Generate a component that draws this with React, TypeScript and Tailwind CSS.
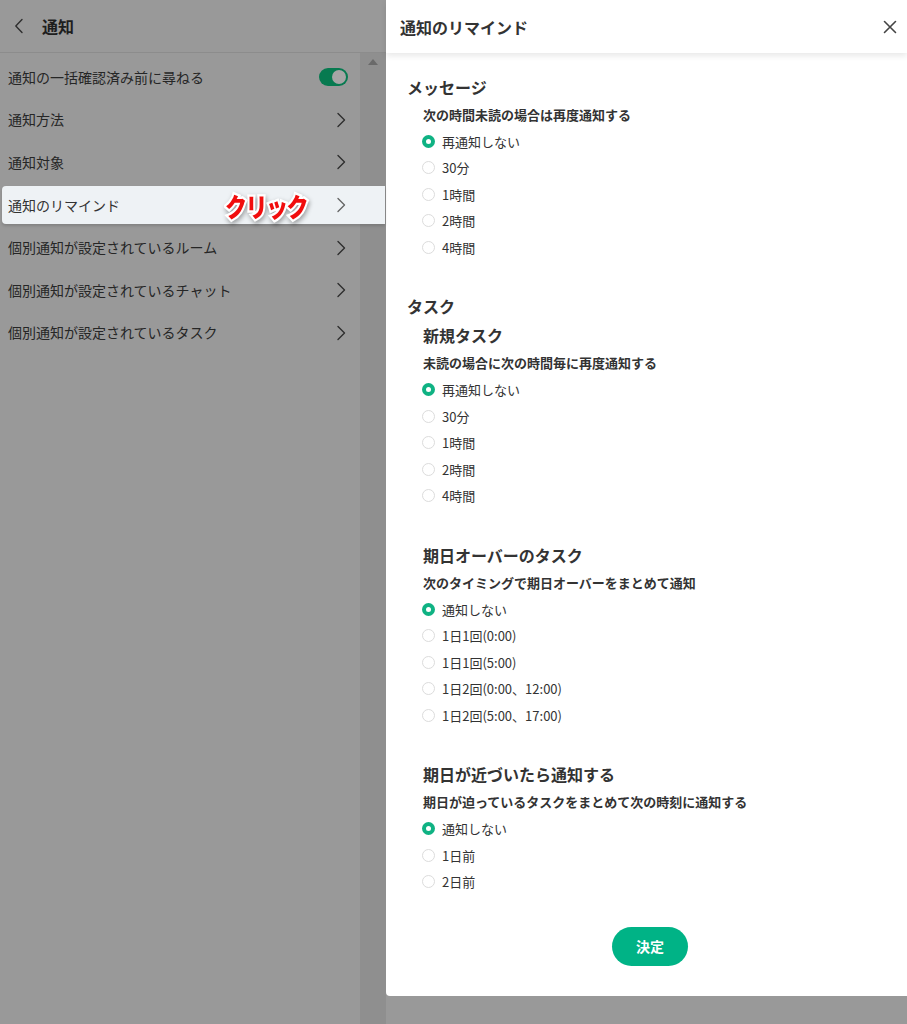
import React from "react";

const FONT = { fontFamily: '"Noto Sans CJK JP", "Noto Sans", sans-serif' };

function Chevron({ color = "#2e2e2e" }: { color?: string }) {
  return (
    <svg width="10" height="16" viewBox="0 0 10 16" fill="none">
      <path d="M2 1.5 L8.5 8 L2 14.5" stroke={color} strokeWidth="1.4" strokeLinecap="round" strokeLinejoin="round" />
    </svg>
  );
}

function Radio({ checked, label }: { checked?: boolean; label: string }) {
  return (
    <div className="flex h-[26.5px] items-center gap-[7px] pl-[15px]">
      {checked ? (
        <span className="flex h-[13px] w-[13px] items-center justify-center rounded-full bg-[#0fb283]">
          <span className="h-[5px] w-[5px] rounded-full bg-white" />
        </span>
      ) : (
        <span className="h-[13px] w-[13px] rounded-full border-[1.5px] border-[#dcdcdc] bg-white" />
      )}
      <span className="text-[13px] text-[#333]">{label}</span>
    </div>
  );
}

function Group({ title, sub, options, indent }: { title: string; sub: string; options: string[]; indent?: boolean }) {
  return (
    <div className="flex flex-col">
      <div className={`flex h-[29px] items-center text-[16px] font-bold text-[#333] ${indent ? "pl-[16px]" : ""}`}>{title}</div>
      <div className="flex h-[27px] items-center pl-[16px] text-[13px] font-bold text-[#333]">{sub}</div>
      <div className="flex flex-col">
        {options.map((o, i) => (
          <Radio key={o} label={o} checked={i === 0} />
        ))}
      </div>
    </div>
  );
}

export default function App() {
  const rows = [
    "通知方法",
    "通知対象",
    "通知のリマインド",
    "個別通知が設定されているルーム",
    "個別通知が設定されているチャット",
    "個別通知が設定されているタスク",
  ];
  return (
    <div style={FONT} className="flex h-[1024px] w-[907px] overflow-hidden bg-[#999999]">
      {/* Left dimmed panel */}
      <div className="flex w-[386px] shrink-0 flex-col">
        <div className="flex h-[53px] items-center gap-[18px] border-b border-[#8c8c8c] pl-[14px]">
          <svg width="10" height="16" viewBox="0 0 10 16" fill="none">
            <path d="M8 1.5 L1.8 8 L8 14.5" stroke="#2e2e2e" strokeWidth="1.4" strokeLinecap="round" strokeLinejoin="round" />
          </svg>
          <span className="text-[16px] font-bold text-[#1e1e1e]">通知</span>
        </div>
        <div className="flex flex-1">
          <div className="flex w-[360px] shrink-0 flex-col pt-[3px]">
            <div className="flex h-[42.6px] items-center justify-between pl-[8px] pr-[12px]">
              <span className="text-[14px] text-[#262626]">通知の一括確認済み前に尋ねる</span>
              <span className="flex h-[18px] w-[29px] items-center justify-end rounded-full bg-[#077a50] pr-[2px]">
                <span className="h-[14px] w-[14px] rounded-full bg-[#a5a5a5]" />
              </span>
            </div>
            {rows.map((r) =>
              r === "通知のリマインド" ? (
                <div key={r} className="flex h-[42.6px] items-center">
                  <div className="relative z-10 ml-[2px] flex h-[38px] w-[383px] shrink-0 items-center justify-between rounded-l-[4px] bg-[#eef2f5] pl-[6px] pr-[39px] shadow-[0_2px_3px_rgba(0,0,0,0.15)]">
                    <span className="text-[14px] text-[#333]">{r}</span>
                    <Chevron color="#666" />
                    <span className="absolute left-[223px] top-[1px] origin-top-left scale-y-[1.2] text-[22px] font-black leading-[30px] tracking-[-1.5px] text-[#f10d0d] [-webkit-text-stroke:4px_white] [paint-order:stroke_fill] [filter:drop-shadow(1px_2px_2px_rgba(0,0,0,0.35))]">
                      クリック
                    </span>
                  </div>
                </div>
              ) : (
                <div key={r} className="flex h-[42.6px] items-center justify-between pl-[8px] pr-[14px]">
                  <span className="text-[14px] text-[#262626]">{r}</span>
                  <Chevron />
                </div>
              )
            )}
          </div>
          <div className="flex w-[26px] justify-center bg-[#8f8f8f] pt-[6px]">
            <svg width="10" height="6" viewBox="0 0 10 6">
              <path d="M0 6 L5 0 L10 6 Z" fill="#6a6a6a" />
            </svg>
          </div>
        </div>
      </div>

      {/* Dialog */}
      <div className="flex h-[996px] w-[521px] flex-col rounded-bl-[4px] bg-white">
        <div className="flex h-[53px] items-center justify-between pl-[14px] pr-[10px] shadow-[0_3px_6px_rgba(0,0,0,0.09)]">
          <span className="text-[16px] font-bold text-[#333]">通知のリマインド</span>
          <svg width="14" height="14" viewBox="0 0 14 14">
            <path d="M1.5 1.5 L12.5 12.5 M12.5 1.5 L1.5 12.5" stroke="#444" strokeWidth="1.6" strokeLinecap="round" />
          </svg>
        </div>
        <div className="flex flex-col pl-[21px] pt-[19px]">
          <Group title="メッセージ" sub="次の時間未読の場合は再度通知する" options={["再通知しない", "30分", "1時間", "2時間", "4時間"]} />
          <div className="mt-[31px] flex h-[29px] items-center text-[16px] font-bold text-[#333]">タスク</div>
          <Group indent title="新規タスク" sub="未読の場合に次の時間毎に再度通知する" options={["再通知しない", "30分", "1時間", "2時間", "4時間"]} />
          <div className="mt-[31px]">
            <Group indent title="期日オーバーのタスク" sub="次のタイミングで期日オーバーをまとめて通知" options={["通知しない", "1日1回(0:00)", "1日1回(5:00)", "1日2回(0:00、12:00)", "1日2回(5:00、17:00)"]} />
          </div>
          <div className="mt-[31px]">
            <Group indent title="期日が近づいたら通知する" sub="期日が迫っているタスクをまとめて次の時刻に通知する" options={["通知しない", "1日前", "2日前"]} />
          </div>
        </div>
        <div className="mt-[32px] flex justify-center pl-[7px]">
          <button className="flex h-[39px] w-[76px] items-center justify-center rounded-full bg-[#00b386] text-[14px] font-bold text-white">
            決定
          </button>
        </div>
      </div>
    </div>
  );
}
